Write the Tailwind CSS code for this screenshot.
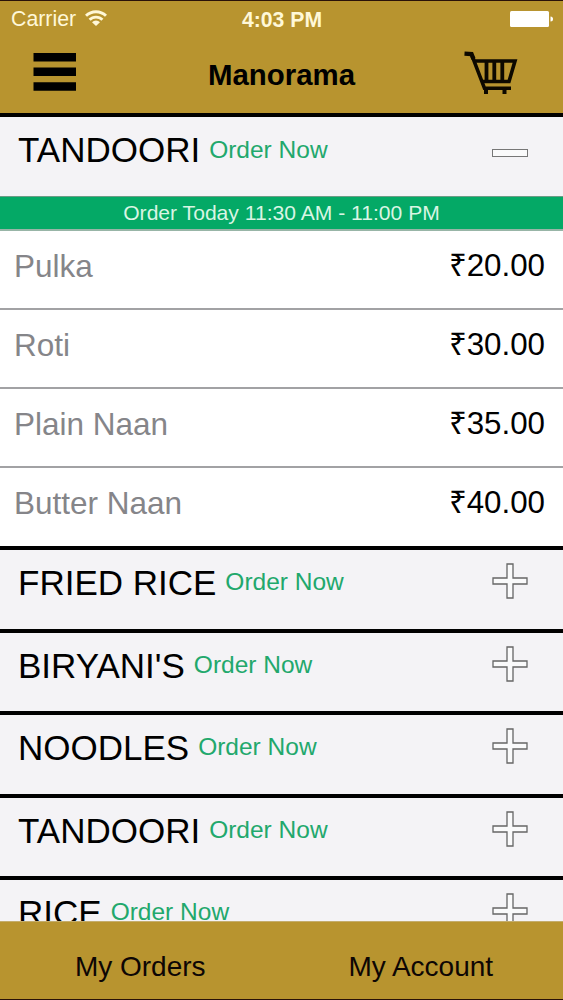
<!DOCTYPE html>
<html lang="en">
<head>
    <meta charset="UTF-8">
    <meta name="viewport" content="width=device-width, initial-scale=1.0">
    <title>Manorama</title>
    <script src="https://cdn.jsdelivr.net/npm/@tailwindcss/browser@4"></script>
</head>
<body class="bg-[#f4f3f6] font-['Liberation_Sans',Arial,sans-serif] text-black">
    <svg class="hidden">
        <symbol id="plus" viewBox="0 0 36 36">
            <path d="M15 1h6v14h14v6H21v14h-6V21H1v-6h14z" fill="#fafafb" stroke="#666" stroke-width="1.3"/>
        </symbol>
    </svg>

    <div class="h-[1000px] flex flex-col overflow-hidden">
        <!-- Header -->
        <header class="h-[117px] shrink-0 bg-[#b8942f] border-t border-t-[#2a1208] border-b-4 border-b-black">
            <div class="h-[36px] grid grid-cols-3 items-center pl-[11px] pr-[10px] text-[#fff8d8]">
                <div class="flex items-center gap-[9px] pt-[2px]">
                    <span class="text-[21.3px] leading-none">Carrier</span>
                    <svg class="w-[22px] h-[16px] -mt-[3px]" viewBox="0 0 22 16" fill="none" stroke="currentColor" stroke-width="2.9">
                        <path d="M1 5.8a14.2 14.2 0 0 1 20 0M4.6 9.8a9 9 0 0 1 12.8 0"/>
                        <path d="M11 16 7 12.2a5.6 5.6 0 0 1 8 0z" fill="currentColor" stroke="none"/>
                    </svg>
                </div>
                <span class="pt-px text-center text-[21.2px] leading-none font-bold">4:03 PM</span>
                <svg class="w-[43px] h-[18px] justify-self-end" viewBox="0 0 43 18" fill="#fff">
                    <rect x="0" y="1" width="39" height="16" rx="1.5"/>
                    <path d="M40.5 6.5q2.5 0 2.5 2.5t-2.5 2.5z"/>
                </svg>
            </div>
            <div class="h-[76px] flex justify-between pl-[33px] pr-[45px]">
                <svg class="w-[44px] h-[38px] mt-[16px]" viewBox="0 0 44 38">
                    <path d="M.5 0h42.5v8.5H.5zM.5 14.5h42.5V23H.5zM.5 29.3h42.5v8.5H.5z"/>
                </svg>
                <h1 class="mt-[21px] ml-[22px] text-[29.4px] leading-[34px] font-bold">Manorama</h1>
                <svg class="w-[54px] h-[44px] mt-[14px]" viewBox="0 0 54 44" fill="none" stroke="#0d0900">
                    <path d="M.5 2.6 7.5 3 9.5 8" stroke-width="4.4"/>
                    <path d="M8 4.6 20.5 37.3H47" stroke-width="3.6"/>
                    <path d="M10 10H51L45 30.5H18.5" stroke-width="3.6"/>
                    <path d="M22.5 10v21M30.3 10v21M38.3 10v21" stroke-width="3.8"/>
                    <path d="M22 37v6M40.5 37v6" stroke-width="4"/>
                </svg>
            </div>
        </header>

        <!-- Menu -->
        <main class="flex-1 min-h-0 overflow-hidden">
            <section class="h-[79px] flex justify-between pl-[18px] pr-[35px]">
                <div class="flex gap-[9px]">
                    <h2 class="mt-[13px] text-[35px] leading-[40px]">TANDOORI</h2>
                    <span class="mt-[19px] text-[24.5px] leading-[28px] text-[#22a86c]">Order Now</span>
                </div>
                <div class="mt-[32px] w-[36px] h-[8px] border border-[#777] bg-[#fafafb]"></div>
            </section>
            <div class="h-[35px] bg-[#04a966] border-t border-t-[#6b9c86] border-b-2 border-b-[#98b5a7] text-center text-[21.1px] leading-[32px] text-[#d9f5e4]">Order Today 11:30 AM - 11:00 PM</div>

            <ul class="bg-white text-[31.5px] leading-[36px]">
                <li class="h-[79px] flex justify-between pt-[17px] pl-[14px] pr-[18px] border-b-2 border-[#a2a2a4]">
                    <span class="text-[#858589]">Pulka</span><span class="text-[31.3px]">₹20.00</span>
                </li>
                <li class="h-[79px] flex justify-between pt-[17px] pl-[14px] pr-[18px] border-b-2 border-[#a2a2a4]">
                    <span class="text-[#858589]">Roti</span><span class="text-[31.3px]">₹30.00</span>
                </li>
                <li class="h-[79px] flex justify-between pt-[17px] pl-[14px] pr-[18px] border-b-2 border-[#a2a2a4]">
                    <span class="text-[#858589]">Plain Naan</span><span class="text-[31.3px]">₹35.00</span>
                </li>
                <li class="h-[78px] flex justify-between pt-[17px] pl-[14px] pr-[18px]">
                    <span class="text-[#858589]">Butter Naan</span><span class="text-[31.3px]">₹40.00</span>
                </li>
            </ul>

            <section class="h-[82.5px] flex justify-between pl-[18px] pr-[35px] border-t-4 border-black">
                <div class="flex gap-[9px]">
                    <h2 class="mt-[13px] text-[35px] leading-[40px]">FRIED RICE</h2>
                    <span class="mt-[18px] text-[24.5px] leading-[28px] text-[#22a86c]">Order Now</span>
                </div>
                <svg class="mt-[13px] w-[36px] h-[36px]"><use href="#plus"/></svg>
            </section>
            <section class="h-[82.5px] flex justify-between pl-[18px] pr-[35px] border-t-4 border-black">
                <div class="flex gap-[9px]">
                    <h2 class="mt-[13px] text-[35px] leading-[40px]">BIRYANI'S</h2>
                    <span class="mt-[18px] text-[24.5px] leading-[28px] text-[#22a86c]">Order Now</span>
                </div>
                <svg class="mt-[13px] w-[36px] h-[36px]"><use href="#plus"/></svg>
            </section>
            <section class="h-[82.5px] flex justify-between pl-[18px] pr-[35px] border-t-4 border-black">
                <div class="flex gap-[9px]">
                    <h2 class="mt-[13px] text-[35px] leading-[40px]">NOODLES</h2>
                    <span class="mt-[18px] text-[24.5px] leading-[28px] text-[#22a86c]">Order Now</span>
                </div>
                <svg class="mt-[13px] w-[36px] h-[36px]"><use href="#plus"/></svg>
            </section>
            <section class="h-[82.5px] flex justify-between pl-[18px] pr-[35px] border-t-4 border-black">
                <div class="flex gap-[9px]">
                    <h2 class="mt-[13px] text-[35px] leading-[40px]">TANDOORI</h2>
                    <span class="mt-[18px] text-[24.5px] leading-[28px] text-[#22a86c]">Order Now</span>
                </div>
                <svg class="mt-[13px] w-[36px] h-[36px]"><use href="#plus"/></svg>
            </section>
            <section class="h-[82.5px] flex justify-between pl-[18px] pr-[35px] border-t-4 border-black">
                <div class="flex gap-[9px]">
                    <h2 class="mt-[13px] text-[35px] leading-[40px]">RICE</h2>
                    <span class="mt-[18px] text-[24.5px] leading-[28px] text-[#22a86c]">Order Now</span>
                </div>
                <svg class="mt-[13px] w-[36px] h-[36px]"><use href="#plus"/></svg>
            </section>
        </main>

        <!-- Footer -->
        <footer class="h-[79px] shrink-0 grid grid-cols-2 bg-[#b8942f] border-t border-t-[#c4ad6c] border-b border-b-[#2a1208] pr-[2px] text-center text-[28px] leading-[32px] text-[#0d0604]">
            <a class="pt-[29px]">My Orders</a>
            <a class="pt-[29px]">My Account</a>
        </footer>
    </div>
</body>
</html>
